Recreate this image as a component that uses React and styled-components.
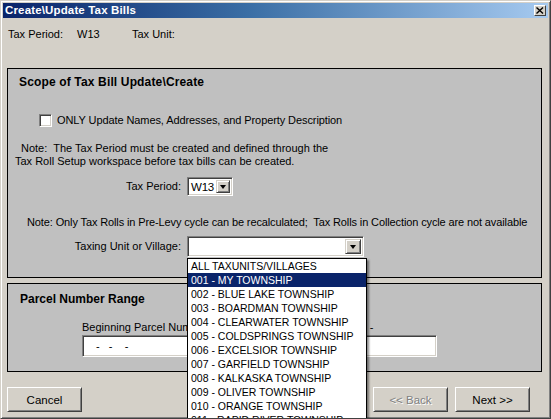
import React from 'react';
import styled, { createGlobalStyle } from 'styled-components';

const Global = createGlobalStyle`
  html, body { margin: 0; padding: 0; background: #d4d0c8; }
  body {
    font-family: "Liberation Sans", Arial, sans-serif;
    font-size: 11px;
    color: #000;
  }
  * { box-sizing: border-box; }
`;

const Window = styled.div`
  width: 551px;
  height: 419px;
  background: #d4d0c8;
  border: 1px solid;
  border-color: #d4d0c8 #404040 #404040 #d4d0c8;
  box-shadow: inset 1px 1px #fff, inset -1px -1px #808080;
  padding: 2px;
  display: flex;
  flex-direction: column;
  overflow: hidden;
`;

const TitleBar = styled.div`
  height: 15px;
  flex: none;
  background: linear-gradient(to right, #0a246a 0%, #3a6ea5 45%, #a6caf0 100%);
  display: flex;
  align-items: center;
  justify-content: space-between;
  padding: 0 2px 0 2px;
`;

const Title = styled.span`
  color: #fff;
  font-weight: bold;
  font-size: 11.5px;
  line-height: 15px;
  letter-spacing: 0.15px;
`;

const CloseButton = styled.div`
  width: 12px;
  height: 11px;
  background: #d4d0c8;
  border: 1px solid;
  border-color: #fff #404040 #404040 #fff;
  display: flex;
  align-items: center;
  justify-content: center;
`;

const Body = styled.div`
  flex: 1;
  display: flex;
  flex-direction: column;
  padding: 0 6px 0 4px;
`;

const InfoRow = styled.div`
  height: 50px;
  flex: none;
  display: flex;
  padding: 9px 0 0 1px;
  line-height: 14px;
`;

const InfoCell = styled.span`
  width: ${p => p.$w}px;
  flex: none;
`;

const Panel = styled.div`
  height: ${p => p.$h}px;
  flex: none;
  margin-top: ${p => p.$mt || 0}px;
  background: #c0c0c0;
  border: 1px solid #000;
  display: flex;
  flex-direction: column;
`;

const PanelHeader = styled.div`
  margin-top: ${p => p.$mt}px;
  padding-left: ${p => p.$pl}px;
  font-weight: bold;
  font-size: 12px;
  line-height: 14px;
  letter-spacing: ${p => p.$ls || 0}px;
`;

const CheckRow = styled.label`
  display: flex;
  align-items: center;
  gap: 5px;
  margin-top: 25px;
  padding-left: 31px;
  height: 13px;
  line-height: 13px;
  letter-spacing: -0.09px;
`;

const CheckBox = styled.span`
  width: 13px;
  height: 13px;
  flex: none;
  background: #fff;
  border: 1px solid;
  border-color: #808080 #fff #fff #808080;
  box-shadow: inset 1px 1px #404040, inset -1px -1px #d4d0c8;
`;

const NoteLine = styled.div`
  padding-left: ${p => p.$pl}px;
  margin-top: ${p => p.$mt || 0}px;
  line-height: 13px;
  white-space: nowrap;
  letter-spacing: ${p => p.$ls || 0}px;
`;

const FieldRow = styled.div`
  display: grid;
  grid-template-columns: 173px auto;
  column-gap: 6px;
  align-items: center;
  margin-top: ${p => p.$mt}px;
`;

const FieldLabel = styled.span`
  text-align: right;
  line-height: 13px;
`;

const ComboWrap = styled.div`
  position: relative;
  width: ${p => p.$w}px;
`;

const Combo = styled.div`
  width: 100%;
  height: ${p => p.$h}px;
  background: #fff;
  border: 1px solid;
  border-color: #808080 #fff #fff #808080;
  box-shadow: inset 1px 1px #404040, inset -1px -1px #d4d0c8;
  display: flex;
  align-items: center;
  justify-content: space-between;
  padding: 2px;
`;

const ComboText = styled.span`
  padding-left: 1px;
  font-size: 11.5px;
  letter-spacing: -0.2px;
`;

const ComboButton = styled.span`
  width: ${p => p.$w}px;
  height: 100%;
  flex: none;
  background: #d4d0c8;
  border: 1px solid;
  border-color: #d4d0c8 #404040 #404040 #d4d0c8;
  box-shadow: inset 1px 1px #fff, inset -1px -1px #808080;
  display: flex;
  align-items: center;
  justify-content: center;
`;

const Arrow = styled.span`
  width: 0;
  height: 0;
  border-left: 3.5px solid transparent;
  border-right: 3.5px solid transparent;
  border-top: 4px solid #000;
  margin-top: 1px;
`;

const DropList = styled.ul`
  position: absolute;
  top: 100%;
  left: 0;
  width: 180px;
  margin: 1px 0 0 0;
  padding: 0;
  list-style: none;
  background: #fff;
  border: 1px solid #000;
  box-shadow: 2px 2px 2px rgba(0, 0, 0, 0.45);
  z-index: 5;
`;

const DropItem = styled.li`
  height: 14px;
  line-height: 14px;
  padding-left: 3px;
  font-size: 10.5px;
  white-space: nowrap;
  background: ${p => (p.$sel ? '#0a246a' : '#fff')};
  color: ${p => (p.$sel ? '#fff' : '#000')};
`;

const ParcelRow = styled.div`
  display: grid;
  grid-template-columns: 168px 181px;
  column-gap: 6px;
  margin-top: 15px;
  padding-left: 74px;
`;

const ParcelCol = styled.div`
  display: flex;
  flex-direction: column;
`;

const ParcelLabel = styled.span`
  line-height: 13px;
  white-space: nowrap;
`;

const TextInput = styled.div`
  height: 22px;
  margin-top: 1px;
  margin-left: ${p => p.$ml || 0}px;
  background: #fff;
  border: 1px solid;
  border-color: #808080 #fff #fff #808080;
  box-shadow: inset 1px 1px #404040, inset -1px -1px #d4d0c8;
  padding-left: 13px;
  display: flex;
  align-items: center;
  white-space: pre;
`;

const ButtonRow = styled.div`
  display: flex;
  justify-content: space-between;
  margin-top: 15px;
  padding-right: 12px;
`;

const ButtonGroup = styled.div`
  display: flex;
  gap: 7px;
`;

const Button = styled.button`
  width: 75px;
  height: 25px;
  padding: 0;
  font-family: "Liberation Sans", Arial, sans-serif;
  font-size: 11.5px;
  background: #d4d0c8;
  border: 1px solid;
  border-color: #fff #404040 #404040 #fff;
  box-shadow: inset 1px 1px #d4d0c8, inset -1px -1px #808080;
  color: ${p => (p.disabled ? '#808080' : '#000')};
  text-shadow: ${p => (p.disabled ? '1px 1px #fff' : 'none')};
`;

const towns = [
  'ALL TAXUNITS/VILLAGES',
  '001 - MY TOWNSHIP',
  '002 - BLUE LAKE TOWNSHIP',
  '003 - BOARDMAN TOWNSHIP',
  '004 - CLEARWATER TOWNSHIP',
  '005 - COLDSPRINGS TOWNSHIP',
  '006 - EXCELSIOR TOWNSHIP',
  '007 - GARFIELD TOWNSHIP',
  '008 - KALKASKA TOWNSHIP',
  '009 - OLIVER TOWNSHIP',
  '010 - ORANGE TOWNSHIP',
  '011 - RAPID RIVER TOWNSHIP',
];

export default function App() {
  return (
    <>
      <Global />
      <Window>
        <TitleBar>
          <Title>Create\Update Tax Bills</Title>
          <CloseButton>
            <svg width="8" height="7" viewBox="0 0 8 7">
              <path d="M0.5 0.5 L7 6.5 M7 0.5 L0.5 6.5" stroke="#000" strokeWidth="1.4" />
            </svg>
          </CloseButton>
        </TitleBar>
        <Body>
          <InfoRow>
            <InfoCell $w={69}>Tax Period:</InfoCell>
            <InfoCell $w={55}>W13</InfoCell>
            <InfoCell $w={80}>Tax Unit:</InfoCell>
          </InfoRow>

          <Panel $h={210}>
            <PanelHeader $mt={6} $pl={11} $ls={0.15}>Scope of Tax Bill Update\Create</PanelHeader>
            <CheckRow>
              <CheckBox />
              <span>ONLY Update Names, Addresses, and Property Description</span>
            </CheckRow>
            <NoteLine $pl={13} $mt={15}>Note:&nbsp; The Tax Period must be created and defined through the</NoteLine>
            <NoteLine $pl={7}>Tax Roll Setup workspace before tax bills can be created.</NoteLine>
            <FieldRow $mt={9}>
              <FieldLabel>Tax Period:</FieldLabel>
              <ComboWrap $w={46}>
                <Combo $h={19}>
                  <ComboText>W13</ComboText>
                  <ComboButton $w={14}><Arrow /></ComboButton>
                </Combo>
              </ComboWrap>
            </FieldRow>
            <NoteLine $pl={19} $mt={20} $ls={-0.12}>Note: Only Tax Rolls in Pre-Levy cycle can be recalculated;&nbsp; Tax Rolls in Collection cycle are not available</NoteLine>
            <FieldRow $mt={7}>
              <FieldLabel>Taxing Unit or Village:</FieldLabel>
              <ComboWrap $w={177}>
                <Combo $h={21}>
                  <span />
                  <ComboButton $w={16}><Arrow /></ComboButton>
                </Combo>
                <DropList>
                  {towns.map((t, i) => (
                    <DropItem key={t} $sel={i === 1}>{t}</DropItem>
                  ))}
                </DropList>
              </ComboWrap>
            </FieldRow>
          </Panel>

          <Panel $h={89} $mt={5}>
            <PanelHeader $mt={8} $pl={12}>Parcel Number Range</PanelHeader>
            <ParcelRow>
              <ParcelCol>
                <ParcelLabel>Beginning Parcel Number</ParcelLabel>
                <TextInput>{'-   -    -'}</TextInput>
              </ParcelCol>
              <ParcelCol>
                <ParcelLabel>Ending Parcel Number -</ParcelLabel>
                <TextInput $ml={6} />
              </ParcelCol>
            </ParcelRow>
          </Panel>

          <ButtonRow>
            <Button>Cancel</Button>
            <ButtonGroup>
              <Button disabled>&lt;&lt; Back</Button>
              <Button>Next &gt;&gt;</Button>
            </ButtonGroup>
          </ButtonRow>
        </Body>
      </Window>
    </>
  );
}
